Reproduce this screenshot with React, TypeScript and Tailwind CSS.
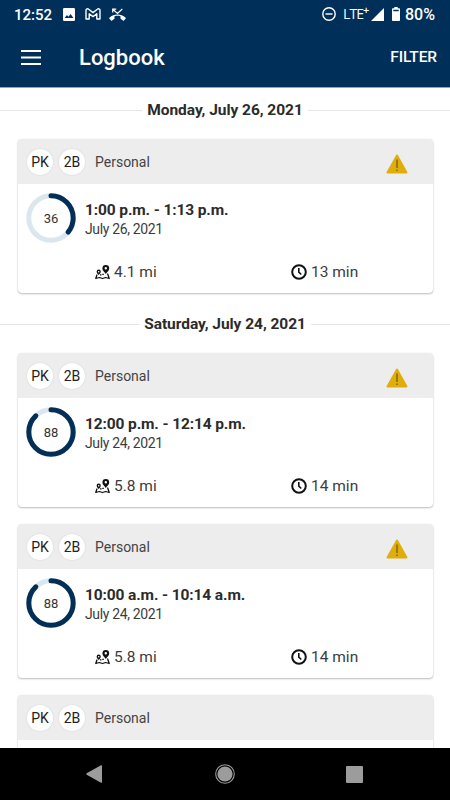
type Trip = { score: number; time: string; date: string; distance: string; duration: string; warning: boolean };

const days: { label: string; trips: Trip[] }[] = [
    {
        label: 'Monday, July 26, 2021',
        trips: [
            { score: 36, time: '1:00 p.m. - 1:13 p.m.', date: 'July 26, 2021', distance: '4.1 mi', duration: '13 min', warning: true },
        ],
    },
    {
        label: 'Saturday, July 24, 2021',
        trips: [
            { score: 88, time: '12:00 p.m. - 12:14 p.m.', date: 'July 24, 2021', distance: '5.8 mi', duration: '14 min', warning: true },
            { score: 88, time: '10:00 a.m. - 10:14 a.m.', date: 'July 24, 2021', distance: '5.8 mi', duration: '14 min', warning: true },
        ],
    },
];

function StatusBar() {
    return (
        <div className="flex h-7 items-center pl-3.5 pr-[13px] text-[16px] leading-7">
            <span className="w-[49px] whitespace-nowrap pt-px text-[15px] font-medium">12:52</span>
            <svg className="h-[13px] w-[12px]" viewBox="0 0 12 13" fill="currentColor">
                <path fillRule="evenodd" d="M1.3 0h9.4Q12 0 12 1.3v10.4q0 1.3-1.3 1.3H1.3Q0 13 0 11.700V1.300Q0 0 1.300 0ZM1.600 10h8.800L7.600 6 5.500 8.800 4 7Z" />
            </svg>
            <svg className="ml-[10px] h-[12px] w-[16px]" viewBox="0 0 16 12" fill="none" stroke="currentColor" strokeWidth="1.400" strokeLinejoin="round">
                <path d="M1 11V2.300C1 .8 2.600.3 3.700 1.300L8 4.600l4.300-3.300C13.400.3 15 .8 15 2.300V11h-3.200V5.800L8 8.600 4.200 5.800V11Z" />
            </svg>
            <svg className="ml-[8px] h-[13px] w-[17px]" viewBox="0 0 17 13" fill="currentColor">
                <path d="M.4 9.700C5 5.500 12 5.500 16.600 9.700c.3.300.3.700 0 1l-1.700 1.700c-.3.300-.7.300-1 0l-2-1.500c-.3-.2-.4-.4-.4-.7V8.300c-2-.6-4-.6-6 0v1.900c0 .3-.1.500-.4.700l-2 1.500c-.3.300-.7.300-1 0L.4 10.700c-.3-.3-.3-.7 0-1Z" />
                <path d="M3.700 4.600V1.200h3.500M4 1.500l4.500 4L13.300 1" fill="none" stroke="currentColor" strokeWidth="1.200" />
            </svg>
            <svg className="ml-auto h-[14px] w-[14px]" viewBox="0 0 14 14" fill="none" stroke="currentColor" strokeWidth="1.400">
                <circle cx="7" cy="7" r="6.200" />
                <path d="M3.500 7h7" />
            </svg>
            <span className="ml-[7px] flex w-[27px] whitespace-nowrap font-['Open_Sans',sans-serif] text-[14px] tracking-[-0.9px]">
                LTE
                <span className="-mt-1 text-[11px] font-semibold">+</span>
            </span>
            <svg className="ml-[1px] h-[13px] w-[13px]" viewBox="0 0 13 13" fill="currentColor">
                <path d="M13 0v13H0Z" />
            </svg>
            <svg className="ml-[8px] h-[14px] w-[8px]" viewBox="0 0 8 14" fill="currentColor">
                <path fillRule="evenodd" d="M2.300 0h3.400v1.300H7.200q.8 0 .8.800v11.100q0 .8-.8.800H.8q-.8 0-.8-.8V2.100q0-.8.8-.8h1.500ZM1.300 2.800v1.400h5.400V2.800Z" />
            </svg>
            <span className="ml-[5px] w-[32px] whitespace-nowrap pt-px font-medium">80%</span>
        </div>
    );
}

function AppBar() {
    return (
        <header className="h-[88px] shrink-0 border-b border-[#8fa5b9] bg-[#002f59] text-white">
            <StatusBar />
            <div className="flex h-[59px] items-center pl-[21px] pr-[13px]">
                <svg className="h-[15px] w-[20px]" viewBox="0 0 20 15" fill="currentColor">
                    <path d="M0 0h20v2H0zM0 6.500h20v2H0zM0 13h20v2H0z" />
                </svg>
                <h1 className="ml-[38px] text-[22px] font-medium">Logbook</h1>
                <button className="ml-auto text-[15.500px] font-medium tracking-[-0.1px]">FILTER</button>
            </div>
        </header>
    );
}

function DayHeading({ label }: { label: string }) {
    return (
        <div className="flex h-[22px] items-center gap-[5px]">
            <div className="h-px flex-1 bg-[#e6e6e6]"></div>
            <h2 className="text-[15.500px] font-bold leading-[22px] tracking-[-0.04px] text-[#2b2b2b]">{label}</h2>
            <div className="h-px flex-1 bg-[#e6e6e6]"></div>
        </div>
    );
}

function Badge({ children }: { children: string }) {
    return (
        <span className="flex h-[26px] w-[26px] items-center justify-center rounded-full bg-white pt-px text-[14px] text-[#222] shadow-[0_0_2px_rgba(0,0,0,0.12)]">
            {children}
        </span>
    );
}

function CardHeader({ warning }: { warning: boolean }) {
    return (
        <div className="flex h-[45px] items-center rounded-t-[4px] bg-[#ededed] pl-[9px] pr-[25px] pt-px">
            <div className="flex gap-1.5">
                <Badge>PK</Badge>
                <Badge>2B</Badge>
            </div>
            <span className="ml-[10px] pt-px text-[14px] text-[#444]">Personal</span>
            {warning && (
                <svg className="ml-auto mt-[3px] h-5 w-[22px]" viewBox="0 0 22 20">
                    <path d="M11 1.500 20.500 18.500H1.500Z" fill="#dfae0c" stroke="#dfae0c" strokeWidth="2" strokeLinejoin="round" />
                    <path d="M11 5.500v8.500M11 15.500v1.500" stroke="#7d5a12" strokeWidth="1.300" />
                </svg>
            )}
        </div>
    );
}

function ScoreRing({ score }: { score: number }) {
    return (
        <svg className="h-[50px] w-[50px] shrink-0" viewBox="0 0 50 50" fill="none">
            <circle cx="25" cy="25" r="22.200" stroke="#dbe7ef" strokeWidth="5" />
            <circle
                cx="25"
                cy="25"
                r="22.200"
                stroke="#032f57"
                strokeWidth="5"
                strokeLinecap="round"
                pathLength="100"
                strokeDasharray={`${score} 100`}
                transform="rotate(-90 25 25)"
            />
            <text x="25" y="29.500" textAnchor="middle" fontSize="13" fill="#333">{score}</text>
        </svg>
    );
}

function RouteIcon() {
    return (
        <svg className="mr-[4px] h-[15px] w-[15px]" viewBox="0 0 15 15" fill="none" stroke="#111">
            <path fillRule="evenodd" d="M10.800 0a3.400 3.400 0 0 1 3.400 3.400c0 2-2 3.400-3.400 5.600C9.400 6.800 7.400 5.400 7.400 3.400A3.400 3.400 0 0 1 10.800 0Zm0 2.100a1.200 1.200 0 1 0 0 2.400a1.200 1.200 0 1 0 0-2.400Z" fill="#111" stroke="none" />
            <path fillRule="evenodd" d="M3.700 4.600a2.100 2.100 0 0 1 2.100 2.100c0 1.200-1.200 2.100-2.100 3.400-.9-1.300-2.100-2.200-2.100-3.400a2.100 2.100 0 0 1 2.100-2.100Zm0 1.300a.8.800 0 1 0 0 1.600a.8.800 0 1 0 0-1.600Z" fill="#111" stroke="none" />
            <path d="M5 9.800h1.500M7.300 9.300h1.500" strokeWidth="1.200" />
            <path d="M1.900 10 .8 13.500l3.500-1 3.200 1 3.200-1 3.500 1L12.700 9" strokeWidth="1.300" strokeLinejoin="round" strokeLinecap="round" />
        </svg>
    );
}

function TripCard({ trip }: { trip: Trip }) {
    return (
        <article className="h-[154px] rounded-[4px] bg-white shadow-[0_1px_2px_rgba(0,0,0,0.26),0_0_1px_rgba(0,0,0,0.15)]">
            <CardHeader warning={trip.warning} />
            <div className="flex pl-2 pt-[8.500px]">
                <ScoreRing score={trip.score} />
                <div className="ml-[9px] pt-[7.500px]">
                    <h3 className="text-[15.500px] font-bold leading-5 tracking-[-0.12px] text-[#2b2b2b]">{trip.time}</h3>
                    <p className="text-[14px] leading-[18px] tracking-[-0.350px] text-[#3c3c3c]">{trip.date}</p>
                </div>
            </div>
            <div className="mt-[19.500px] flex text-[15.500px] leading-5 text-[#3c3c3c]">
                <div className="flex w-[196px] items-center pl-[77px]">
                    <RouteIcon />
                    {trip.distance}
                </div>
                <div className="flex items-center pl-[77px]">
                    <svg className="mr-[4px] h-4 w-4" viewBox="0 0 16 16" fill="none" stroke="#111" strokeWidth="2">
                        <circle cx="8" cy="8" r="6.800" />
                        <path d="M7.800 4v4.200l2.500 2.300" strokeWidth="1.600" />
                    </svg>
                    {trip.duration}
                </div>
            </div>
        </article>
    );
}

function NavBar() {
    return (
        <nav className="flex h-[52px] shrink-0 items-center bg-black text-[#9c9c9c]">
            <svg className="ml-[86px] h-[18px] w-4" viewBox="0 0 16 18" fill="currentColor">
                <path d="M15 .3q1-.5 1 .7v16q0 1.200-1 .7L.7 9.700q-.8-.7 0-1.400Z" />
            </svg>
            <svg className="ml-[113px] h-5 w-5" viewBox="0 0 20 20">
                <circle cx="10" cy="10" r="9.300" fill="none" stroke="currentColor" strokeWidth="1.100" />
                <circle cx="10" cy="10" r="7.600" fill="currentColor" />
            </svg>
            <div className="ml-[111px] h-[17px] w-[17px] rounded-[1px] bg-[#9c9c9c]"></div>
        </nav>
    );
}

export default function App() {
    return (
        <div className="flex h-[800px] w-[450px] flex-col overflow-hidden bg-white font-['Roboto',sans-serif]">
            <AppBar />
            <main className="min-h-0 flex-1 overflow-hidden pt-[11px]">
                {days.map((day) => (
                    <section key={day.label} className="mb-[20px] last:mb-0">
                        <DayHeading label={day.label} />
                        <div className="mx-[17px] mt-[18px] flex flex-col gap-[17px] pl-px">
                            {day.trips.map((trip) => (
                                <TripCard key={trip.time} trip={trip} />
                            ))}
                            {/* next trip, still scrolled under the nav bar */}
                            {day.trips.length > 1 && (
                                <article className="h-[154px] rounded-[4px] bg-white shadow-[0_1px_2px_rgba(0,0,0,0.26),0_0_1px_rgba(0,0,0,0.15)]">
                                    <CardHeader warning={false} />
                                </article>
                            )}
                        </div>
                    </section>
                ))}
            </main>
            <NavBar />
        </div>
    );
}
